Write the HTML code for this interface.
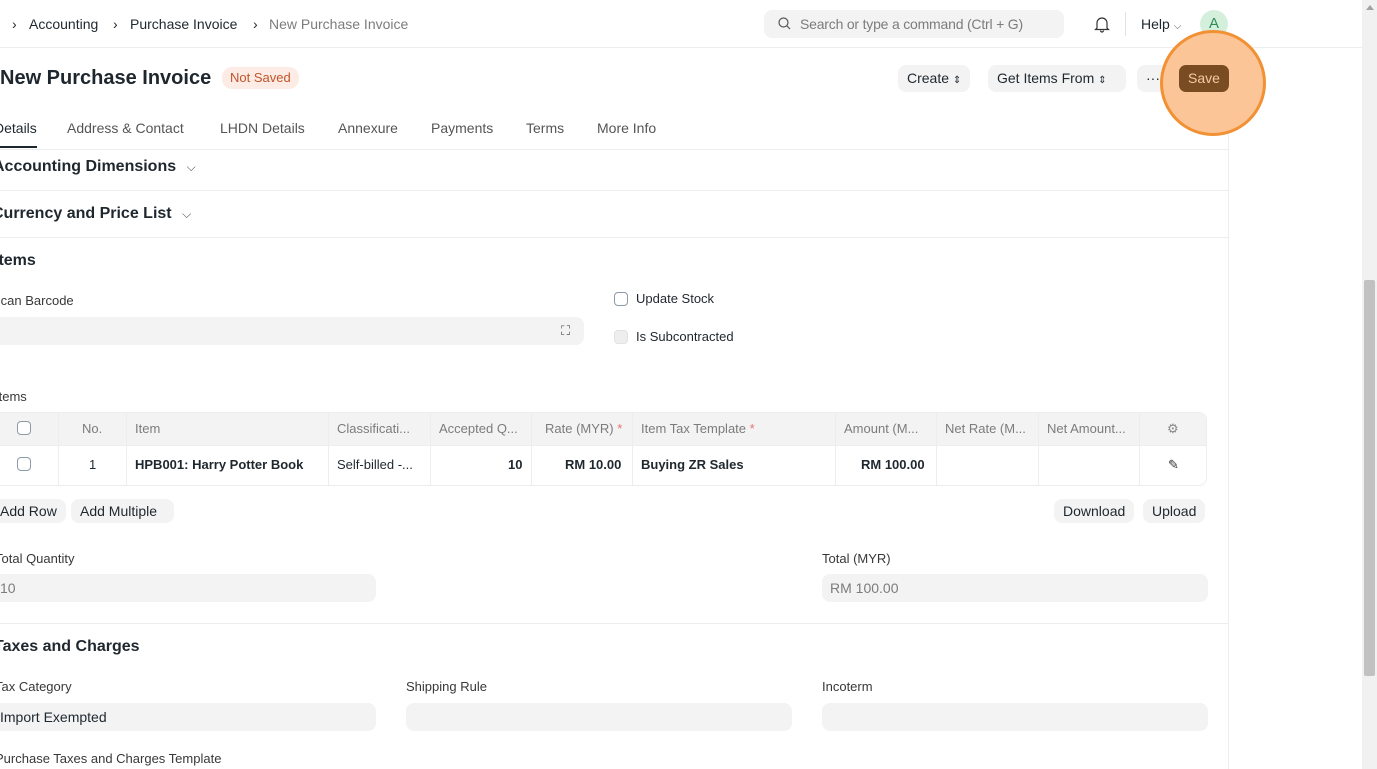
<!DOCTYPE html>
<html><head><meta charset="utf-8"><style>
*{box-sizing:border-box;margin:0;padding:0}
body{width:1377px;height:769px;overflow:hidden;background:#fff;font-family:"Liberation Sans",Arial,sans-serif;color:#1f272e;position:relative}
.a{position:absolute;white-space:nowrap}
.hl{position:absolute;height:1px;background:#ebeef0}
.btn{position:absolute;background:#f3f3f3;border-radius:8px;font-size:14px;color:#1f272e;height:27px;line-height:27px;padding:0 9px}
.lbl{position:absolute;font-size:13px;color:#383838}
.inp{position:absolute;background:#f3f3f3;border-radius:8px;height:28px;font-size:14px;line-height:28px;padding-left:8px;color:#1f272e}
.sec{position:absolute;font-size:16px;font-weight:bold;color:#1f272e}
.cb{position:absolute;width:14px;height:14px;border:1px solid #8d99a6;border-radius:4px;background:#fff}
.th{position:absolute;font-size:13px;color:#7c7c7c;top:421px}
.td{position:absolute;font-size:13px;top:457px;color:#1f272e}
.vl{position:absolute;width:1px;background:#ebeef0;top:413px;height:72px}
</style></head><body>
<!-- header -->
<div class="a" style="left:12px;top:16px;font-size:14px">›</div>
<div class="a" style="left:29px;top:16px;font-size:14px">Accounting</div>
<div class="a" style="left:113px;top:16px;font-size:14px">›</div>
<div class="a" style="left:130px;top:16px;font-size:14px">Purchase Invoice</div>
<div class="a" style="left:253px;top:16px;font-size:14px">›</div>
<div class="a" style="left:269px;top:16px;font-size:14px;color:#7c7c7c">New Purchase Invoice</div>
<div class="a" style="left:764px;top:10px;width:300px;height:28px;background:#f3f3f3;border-radius:8px"></div>
<svg class="a" style="left:777px;top:16px" width="15" height="15" viewBox="0 0 15 15"><circle cx="6.5" cy="6.5" r="4.5" fill="none" stroke="#555" stroke-width="1.2"/><line x1="10" y1="10" x2="13" y2="13" stroke="#555" stroke-width="1.2"/></svg>
<div class="a" style="left:800px;top:16px;font-size:14px;color:#7c7c7c;letter-spacing:-0.2px">Search or type a command (Ctrl + G)</div>
<svg class="a" style="left:1094px;top:15px" width="16" height="18" viewBox="0 0 16 18"><path d="M3 13V8a5 5 0 0 1 10 0v5l1.5 1.5h-13z M6.5 15.5a1.5 1.5 0 0 0 3 0" fill="none" stroke="#333" stroke-width="1.2"/></svg>
<div class="a" style="left:1125px;top:12px;width:1px;height:24px;background:#e2e2e2"></div>
<div class="a" style="left:1141px;top:16px;font-size:14px">Help <span style="font-size:10px;color:#555">⌵</span></div>
<div class="a" style="left:1200px;top:10px;width:28px;height:28px;border-radius:50%;background:#d4f0dd;color:#2e8b57;font-size:15px;text-align:center;line-height:28px">A</div>
<div class="hl" style="left:0;top:47px;width:1362px"></div>
<!-- title -->
<div class="a" style="left:0;top:67px;font-size:20px;font-weight:bold">New Purchase Invoice</div>
<div class="a" style="left:222px;top:67px;height:22px;line-height:22px;padding:0 8px;border-radius:10px;background:#fdece5;color:#c0542a;font-size:13px">Not Saved</div>
<div class="btn" style="left:898px;top:65px">Create <span style="font-size:10px">⇕</span></div>
<div class="btn" style="left:988px;top:65px;width:138px">Get Items From <span style="font-size:10px">⇕</span></div>
<div class="btn" style="left:1137px;top:65px;width:40px">···</div>
<!-- tabs -->
<div class="a" style="left:-6px;top:120px;font-size:14px;color:#1f272e">Details</div>
<div class="a" style="left:0;top:146px;width:37px;height:2px;background:#1f272e"></div>
<div class="a" style="left:67px;top:120px;font-size:14px;color:#555">Address &amp; Contact</div>
<div class="a" style="left:220px;top:120px;font-size:14px;color:#555">LHDN Details</div>
<div class="a" style="left:338px;top:120px;font-size:14px;color:#555">Annexure</div>
<div class="a" style="left:431px;top:120px;font-size:14px;color:#555">Payments</div>
<div class="a" style="left:526px;top:120px;font-size:14px;color:#555">Terms</div>
<div class="a" style="left:597px;top:120px;font-size:14px;color:#555">More Info</div>
<div class="hl" style="left:0;top:149px;width:1228px"></div>
<div class="a" style="left:1228px;top:48px;width:1px;height:721px;background:#ebeef0"></div>
<div class="sec" style="left:-7px;top:158px">Accounting Dimensions <span style="font-weight:normal;font-size:12px;color:#555;margin-left:6px">⌵</span></div>
<div class="hl" style="left:0;top:190px;width:1228px"></div>
<div class="sec" style="left:-8px;top:205px">Currency and Price List <span style="font-weight:normal;font-size:12px;color:#555;margin-left:6px">⌵</span></div>
<div class="hl" style="left:0;top:237px;width:1228px"></div>
<div class="sec" style="left:-6px;top:252px">Items</div>
<div class="lbl" style="left:-8px;top:293px">Scan Barcode</div>
<div class="inp" style="left:-8px;top:317px;width:592px"></div>
<div class="a" style="left:561px;top:323px;font-size:13px;color:#555">⛶</div>
<div class="cb" style="left:614px;top:292px"></div>
<div class="a" style="left:636px;top:291px;font-size:13px">Update Stock</div>
<div class="cb" style="left:614px;top:330px;background:#eee;border-color:#e2e2e2"></div>
<div class="a" style="left:636px;top:329px;font-size:13px">Is Subcontracted</div>
<div class="lbl" style="left:-5px;top:389px">Items</div>
<!-- table -->
<div class="a" style="left:-10px;top:412px;width:1217px;height:74px;border:1px solid #ebeef0;border-radius:8px;overflow:hidden"><div style="height:33px;background:#f3f3f3;border-bottom:1px solid #ebeef0"></div></div>
<div class="vl" style="left:58px"></div><div class="vl" style="left:126px"></div><div class="vl" style="left:328px"></div><div class="vl" style="left:430px"></div><div class="vl" style="left:531px"></div><div class="vl" style="left:632px"></div><div class="vl" style="left:835px"></div><div class="vl" style="left:936px"></div><div class="vl" style="left:1038px"></div><div class="vl" style="left:1139px"></div>
<div class="cb" style="left:17px;top:421px"></div><div class="cb" style="left:17px;top:457px"></div>
<div class="th" style="left:82px">No.</div>
<div class="th" style="left:135px">Item</div>
<div class="th" style="left:337px">Classificati...</div>
<div class="th" style="left:439px">Accepted Q...</div>
<div class="th" style="left:545px">Rate (MYR) <span style="color:#e57373">*</span></div>
<div class="th" style="left:641px">Item Tax Template <span style="color:#e57373">*</span></div>
<div class="th" style="left:844px">Amount (M...</div>
<div class="th" style="left:945px">Net Rate (M...</div>
<div class="th" style="left:1047px">Net Amount...</div>
<div class="th" style="left:1167px;color:#888">⚙</div>
<div class="td" style="left:89px">1</div>
<div class="td" style="left:135px;font-weight:bold">HPB001: Harry Potter Book</div>
<div class="td" style="left:337px">Self-billed -...</div>
<div class="td" style="left:508px;font-weight:bold">10</div>
<div class="td" style="left:565px;font-weight:bold">RM 10.00</div>
<div class="td" style="left:641px;font-weight:bold">Buying ZR Sales</div>
<div class="td" style="left:861px;font-weight:bold">RM 100.00</div>
<div class="td" style="left:1168px;color:#333">✎</div>
<div class="btn" style="left:-9px;top:499px;height:24px;line-height:24px;font-size:14px">Add Row</div>
<div class="btn" style="left:71px;top:499px;height:24px;line-height:24px;font-size:14px;width:103px">Add Multiple</div>
<div class="btn" style="left:1054px;top:499px;height:24px;line-height:24px;font-size:14px">Download</div>
<div class="btn" style="left:1143px;top:499px;height:24px;line-height:24px;font-size:14px">Upload</div>
<div class="lbl" style="left:-5px;top:551px">Total Quantity</div>
<div class="inp" style="left:-8px;top:574px;width:384px;color:#7c7c7c">10</div>
<div class="lbl" style="left:822px;top:551px">Total (MYR)</div>
<div class="inp" style="left:822px;top:574px;width:386px;color:#7c7c7c">RM 100.00</div>
<div class="hl" style="left:0;top:623px;width:1228px"></div>
<div class="sec" style="left:-6px;top:638px">Taxes and Charges</div>
<div class="lbl" style="left:-5px;top:679px">Tax Category</div>
<div class="inp" style="left:-8px;top:703px;width:384px">Import Exempted</div>
<div class="lbl" style="left:406px;top:679px">Shipping Rule</div>
<div class="inp" style="left:406px;top:703px;width:386px"></div>
<div class="lbl" style="left:822px;top:679px">Incoterm</div>
<div class="inp" style="left:822px;top:703px;width:386px"></div>
<div class="lbl" style="left:-5px;top:751px">Purchase Taxes and Charges Template</div>
<!-- scrollbar -->
<div class="a" style="left:1362px;top:0;width:15px;height:769px;background:#f1f1f1"></div>
<div class="a" style="left:1364px;top:280px;width:11px;height:396px;background:#c1c1c1;border-radius:2px"></div>
<div class="a" style="left:1366px;top:5px;width:0;height:0;border-left:4px solid transparent;border-right:4px solid transparent;border-bottom:5px solid #a3a3a3"></div>
<!-- highlight -->
<div class="a" style="left:1160px;top:30px;width:106px;height:106px;border-radius:50%;background:#fbc597;border:3px solid #f29133"></div>
<div class="a" style="left:1179px;top:65px;width:50px;height:27px;background:#7a4c22;border-radius:7px;color:#f4c9a3;font-size:14px;text-align:center;line-height:27px">Save</div>
</body></html>
